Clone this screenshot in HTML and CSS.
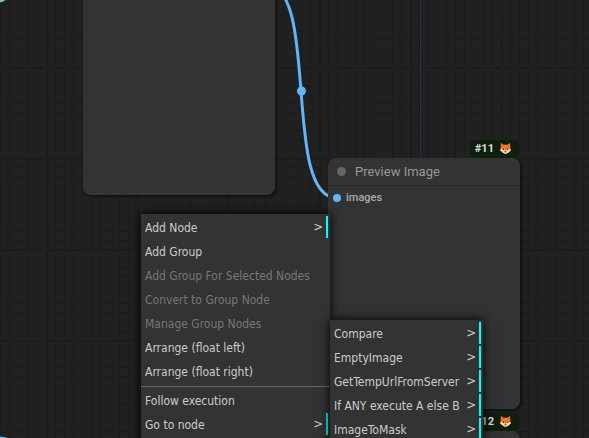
FILE: index.html
```
<!DOCTYPE html>
<html lang="en">
<head>
<meta charset="utf-8">
<title>Node graph</title>
<link rel="stylesheet" href="styles.css">
</head>
<body>
<svg width="0" height="0" class="defs" aria-hidden="true">
  <symbol id="fox" viewBox="0 0 12 12">
    <path fill="#f4772b" d="M1 0 L4 2 H8 L11 0 L11.300 6 L12 8 L6 12 L0 8 L.7 6Z"/>
    <path fill="#d9602a" d="M1.500 1.500 L3 2.600 L2 4Z M10.500 1.500 L9 2.600 L10 4Z"/>
    <path fill="#ffdca0" d="M0 8 L1.500 6.500 L4.500 7 L6 9 L7.500 7 L10.500 6.500 L12 8 L9 10.500 L6 12 L3 10.500Z"/>
    <circle cx="3.700" cy="6.800" r=".8" fill="#3b2520"/>
    <circle cx="8.300" cy="6.800" r=".8" fill="#3b2520"/>
    <path fill="#3b2520" d="M4.800 9 H7.200 L6 10.500Z"/>
  </symbol>
</svg>
<main class="graph">
  <svg class="layer" aria-hidden="true">
    <defs>
      <pattern id="grid" x="46" y="67" width="91" height="91" patternUnits="userSpaceOnUse">
        <path fill="#1c1c1c" d="M0 0h2v91h-2z M9 0h1v91h-1z M18 0h1v91h-1z M27 0h1v91h-1z M36 0h1v91h-1z M45 0h1v91h-1z M54 0h1v91h-1z M73 0h1v91h-1z M82 0h1v91h-1z M0 0v2h91v-2z M0 9v1h91v-1z M0 18v1h91v-1z M0 27v1h91v-1z M0 36v1h91v-1z M0 45v1h91v-1z M0 54v1h91v-1z M0 63v1h91v-1z M0 73v1h91v-1z M0 82v1h91v-1z"/>
      </pattern>
    </defs>
    <rect width="100%" height="100%" fill="url(#grid)"/>
    <path d="M420.500 0V438" stroke="#222f5c"/>
    <path d="M-8 2Q1 2 6 -2" fill="none" stroke="#7fc97f" stroke-width="3"/>
    <path d="M-10 438Q2 437 12 441" fill="none" stroke="#64b5f6" stroke-width="3"/>
    <path d="M265 -16C321 -16 281 198 337 198" fill="none" stroke="#64b5f6" stroke-width="3"/>
    <circle cx="301.500" cy="91" r="4.500" fill="#64b5f6"/>
  </svg>

  <section class="node node-source"></section>

  <section class="node node-preview">
    <span class="badge">#11 <svg class="fox"><use href="#fox"/></svg></span>
    <h2 class="title"><i class="dot"></i>Preview Image</h2>
    <p class="slot"><i class="port"></i>images</p>
  </section>

  <section class="node node-next">
    <span class="badge">#12 <svg class="fox"><use href="#fox"/></svg></span>
  </section>

  <nav class="menu menu-main">
    <button class="item sub">Add Node<span>&gt;</span></button>
    <button class="item">Add Group</button>
    <button class="item" disabled>Add Group For Selected Nodes</button>
    <button class="item" disabled>Convert to Group Node</button>
    <button class="item" disabled>Manage Group Nodes</button>
    <button class="item">Arrange (float left)</button>
    <button class="item">Arrange (float right)</button>
    <hr>
    <button class="item">Follow execution</button>
    <button class="item sub">Go to node<span>&gt;</span></button>
  </nav>

  <nav class="menu menu-sub">
    <button class="item sub">Compare<span>&gt;</span></button>
    <button class="item sub">EmptyImage<span>&gt;</span></button>
    <button class="item sub">GetTempUrlFromServer<span>&gt;</span></button>
    <button class="item sub">If ANY execute A else B<span>&gt;</span></button>
    <button class="item sub">ImageToMask<span>&gt;</span></button>
  </nav>
</main>
</body>
</html>
```
FILE: styles.css
```
* { box-sizing: border-box; }
body { margin: 0; background: #212121; }
.defs { position: absolute; }
.graph {
  position: relative;
  height: 100vh;
  overflow: hidden;
  font-family: Roboto, "Liberation Sans", sans-serif;
}
.layer { position: absolute; inset: 0; width: 100%; height: 100%; }

.node {
  position: absolute;
  width: 192px;
  background: #333;
  border-radius: 8px;
  box-shadow: 2px 2px 3px rgba(0, 0, 0, .5);
}
.node-source { left: 83px; top: -80px; height: 275px; }
.node-preview { left: 328px; top: 158px; height: 251px; }
.node-next { left: 328px; top: 431px; height: 100px; }

.title {
  display: flex;
  align-items: center;
  gap: 9px;
  height: 28px;
  margin: 0;
  padding-left: 9px;
  border-bottom: 1px solid #2b2b2b;
  color: #999;
  font-size: 13px;
  font-weight: 400;
}
.dot { width: 9px; height: 9px; border-radius: 50%; background: #666; }
.slot {
  display: flex;
  align-items: center;
  gap: 5px;
  margin: 4px 0 0 5px;
  color: #aaa;
  font-size: 11px;
  font-weight: 500;
  line-height: 16px;
}
.port { width: 8px; height: 8px; border-radius: 50%; background: #64b5f6; }

.badge {
  position: absolute;
  right: 1px;
  bottom: 100%;
  display: flex;
  align-items: center;
  gap: 6px;
  height: 18px;
  padding: 0 8px 1px 5px;
  border-radius: 5px;
  background: #0f1f0f;
  color: #ddd;
  font-size: 11px;
  font-weight: 700;
}
.fox { width: 11px; height: 11px; }

.menu {
  position: absolute;
  display: flex;
  flex-direction: column;
  gap: 2px;
  padding: 2px 2px 20px 0;
  background: #333;
  box-shadow: 0 0 10px #000;
}
.menu-main { left: 141px; top: 214px; width: 189px; }
.menu-sub { left: 330px; top: 320px; width: 153px; }
.item {
  display: flex;
  align-items: center;
  justify-content: space-between;
  height: 22px;
  padding: 2px 4px 0;
  border: 0;
  background: none;
  color: #ccc;
  font: 12px "DejaVu Sans Condensed", "Noto Sans", sans-serif;
  white-space: nowrap;
}
.item:disabled { color: #777; }
.sub { padding-right: 3px; border-right: 2px solid #0ff; }
.sub span { font-size: 13px; line-height: 12px; padding-bottom: 2px; }
.menu hr {
  width: calc(100% + 2px);
  height: 1px;
  margin: 2px 0 0;
  border: 0;
  background: #666;
}
```
